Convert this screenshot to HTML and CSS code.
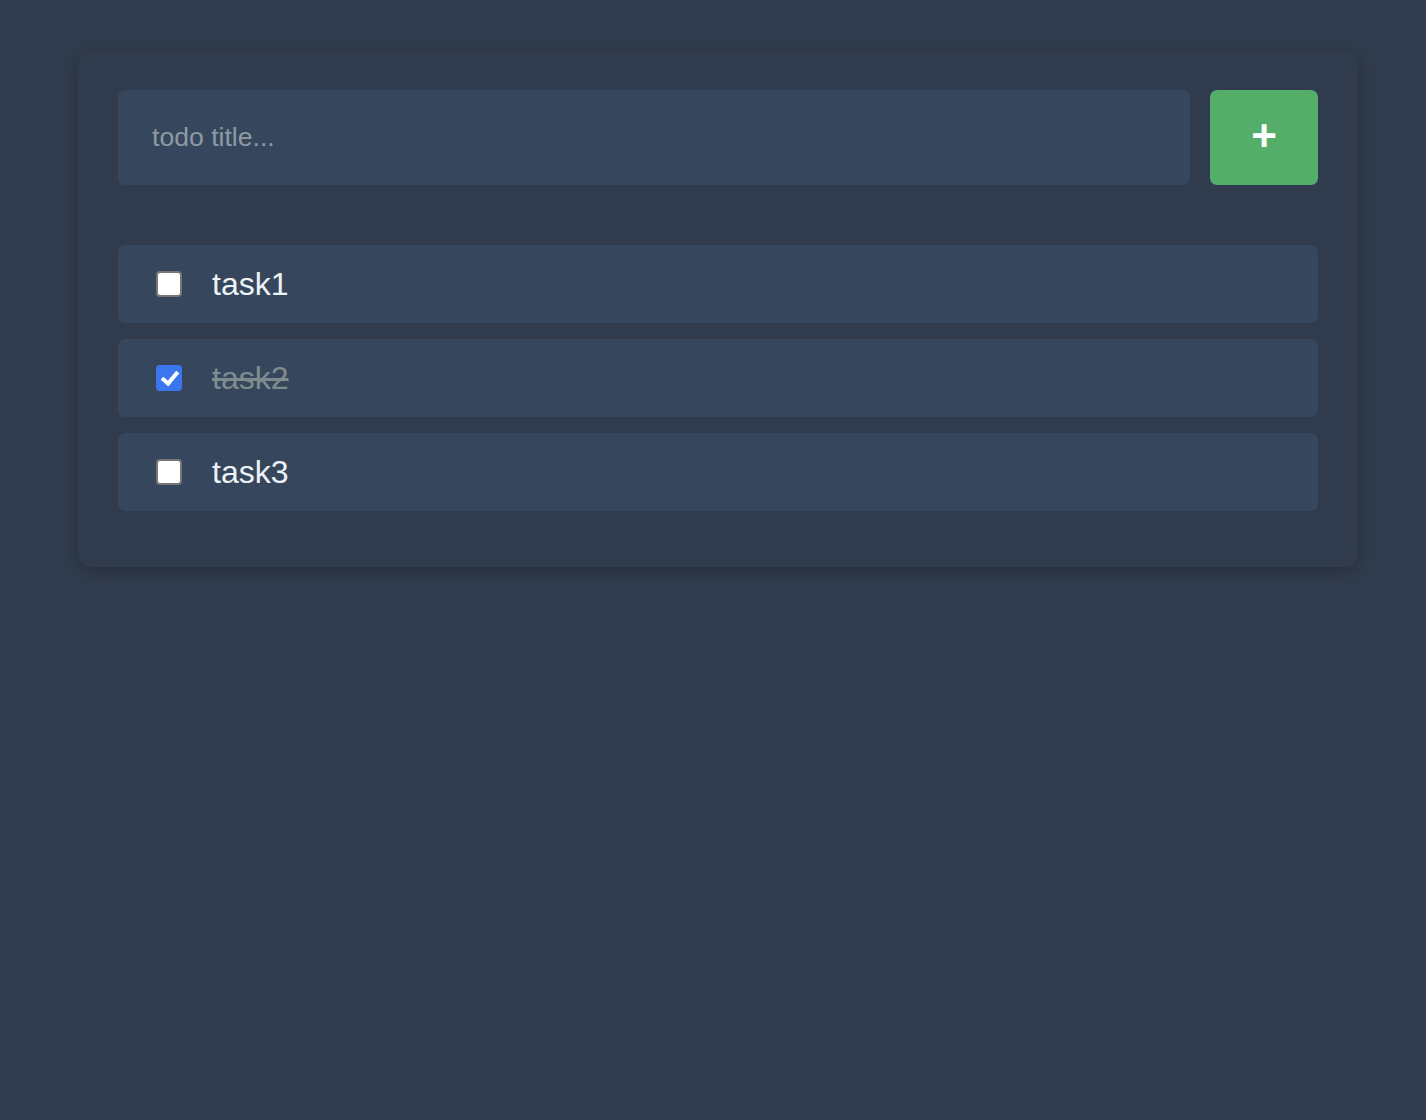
FILE: index.html
```html
<!DOCTYPE html>
<html>
<head>
<meta charset="utf-8">
<link rel="stylesheet" href="styles.css">
</head>
<body>
<div class="card">
  <form class="add">
    <input class="title" type="text" placeholder="todo title...">
    <button class="plus" type="button">+</button>
  </form>
  <ul class="list">
    <li class="item"><input type="checkbox" class="check"><span class="label">task1</span></li>
    <li class="item done"><input type="checkbox" class="check" checked><span class="label">task2</span></li>
    <li class="item"><input type="checkbox" class="check"><span class="label">task3</span></li>
  </ul>
</div>
</body>
</html>
```
FILE: styles.css
```css
html, body {
  margin: 0;
  padding: 0;
  background: #313d4f;
  font-family: "Liberation Sans", Arial, sans-serif;
  min-height: 100vh;
}
.card {
  width: 1200px;
  margin: 52px 0 0 78px;
  padding: 38px 40px 56px;
  background: #303c4e;
  border-radius: 14px;
  box-shadow: 0 4px 18px rgba(20, 26, 36, 0.45);
}
.add {
  display: flex;
  gap: 20px;
  margin: 0;
}
.title {
  flex: 1;
  height: 95px;
  box-sizing: border-box;
  border: none;
  outline: none;
  background: #36475d;
  border-radius: 7px;
  padding: 0 34px;
  font-size: 26.6px;
  font-family: inherit;
  color: #e8edf2;
}
.title::placeholder { color: #8d9aa3; }
.plus {
  width: 108px;
  height: 95px;
  border: none;
  border-radius: 7px;
  background: #55ad6a;
  color: #fff;
  font-size: 44px;
  font-weight: bold;
  font-family: inherit;
  line-height: 1;
  padding: 0 0 4px;
}
.list {
  list-style: none;
  margin: 60px 0 0;
  padding: 0;
  display: flex;
  flex-direction: column;
  gap: 16px;
}
.item {
  display: flex;
  align-items: center;
  height: 78px;
  background: #36475d;
  border-radius: 7px;
  padding: 0 38px;
  gap: 30px;
}
.check {
  appearance: none;
  -webkit-appearance: none;
  position: relative;
  box-sizing: border-box;
  width: 26px;
  height: 26px;
  margin: 0;
  background: #fff;
  border: 2px solid #767676;
  border-radius: 4px;
}
.check:checked {
  background: #3b76ef;
  border-color: #3b76ef;
}
.check:checked::after {
  content: "";
  position: absolute;
  left: 7px;
  top: 1px;
  width: 6px;
  height: 13px;
  border: solid #fff;
  border-width: 0 4px 4px 0;
  transform: rotate(40deg);
}
.label {
  font-size: 32px;
  color: #eef2f6;
}
.done .label {
  color: #7f8c8f;
  text-decoration: line-through;
}
```
